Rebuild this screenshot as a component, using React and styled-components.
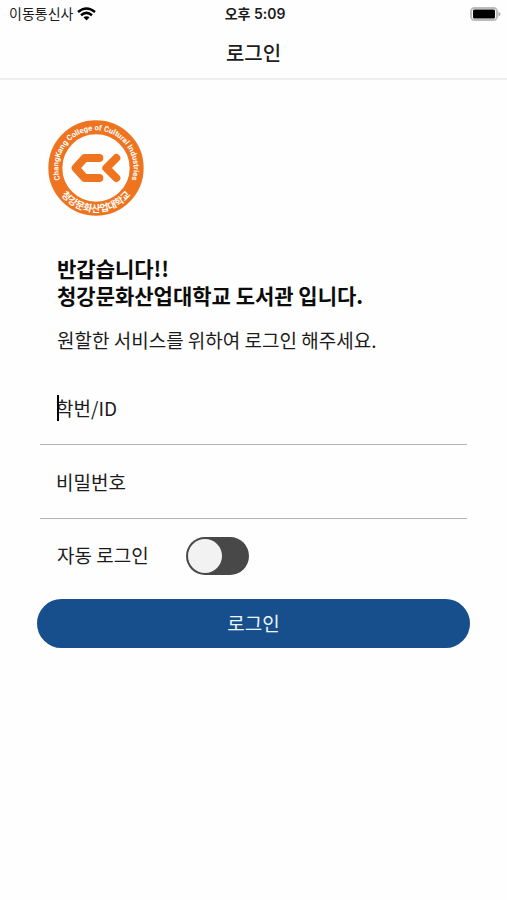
import React, { useState } from 'react';
import styled, { createGlobalStyle } from 'styled-components';

const GlobalStyle = createGlobalStyle`
  * {
    box-sizing: border-box;
  }
  body {
    margin: 0;
    background: #fefefe;
    color: #1c1c1c;
    font-family: 'Noto Sans CJK KR', 'Noto Sans', sans-serif;
  }
`;

const StatusBar = styled.div`
  display: grid;
  grid-template-columns: 1fr auto 1fr;
  align-items: center;
  height: 27px;
  padding: 0 6px 0 9px;
  font-size: 14px;
  line-height: 27px;
`;

const Carrier = styled.div`
  display: flex;
  align-items: center;
  gap: 4px;
`;

const Clock = styled.time`
  font-family: Inter, 'Noto Sans CJK KR', sans-serif;
  font-size: 14px;
  font-weight: 600;
`;

const Battery = styled.svg`
  justify-self: end;
`;

const NavBar = styled.header`
  display: flex;
  align-items: center;
  justify-content: center;
  height: 53px;
  border-bottom: 2px solid #efefef;
`;

const NavTitle = styled.h1`
  margin: 0;
  font-size: 20px;
  font-weight: 500;
  line-height: 28px;
`;

const Main = styled.main`
  padding: 40px 37px;
`;

const Logo = styled.svg`
  display: block;
  width: 96px;
  height: 96px;
  margin-left: 11px;
`;

const Intro = styled.section`
  padding: 39px 0 0 20px;
`;

const Greeting = styled.h2`
  margin: 0;
  color: #0c0c0c;
  font-size: 21px;
  font-weight: 700;
  line-height: 27px;
`;

const Guide = styled.p`
  margin: 17px 0 0;
  font-size: 19px;
  line-height: 28px;
`;

const Form = styled.form`
  margin: 17px 0 0;
`;

const Field = styled.div`
  position: relative;
  margin: 0 3px;
  border-bottom: 1px solid #b4b4b4;
`;

const Input = styled.input`
  display: block;
  width: 100%;
  height: 73px;
  padding: 0 16px;
  border: 0;
  outline: 0;
  background: transparent;
  color: #1c1c1c;
  font-family: inherit;
  font-size: 19px;
  &::placeholder {
    color: #1c1c1c;
    opacity: 1;
  }
`;

const Caret = styled.span`
  position: absolute;
  top: 24px;
  left: 17px;
  width: 2px;
  height: 26px;
  background: #000;
  pointer-events: none;
`;

const AutoLogin = styled.div`
  display: flex;
  align-items: center;
  gap: 37px;
  height: 80px;
  padding: 0 0 6px 20px;
  font-size: 19px;
  line-height: 24px;
`;

const AutoLabel = styled.label`
  padding-bottom: 3px;
`;

const Switch = styled.input`
  appearance: none;
  width: 63px;
  height: 38px;
  margin: 0;
  padding: 2px;
  border-radius: 19px;
  background: ${({ checked }) => (checked ? '#164f8c' : '#484848')};
  cursor: pointer;
  &::before {
    content: '';
    display: block;
    width: 34px;
    height: 34px;
    margin-left: ${({ checked }) => (checked ? 'auto' : '0')};
    border-radius: 50%;
    background: #f2f2f2;
  }
`;

const Button = styled.button`
  display: block;
  width: 100%;
  height: 49px;
  padding: 0 0 3px;
  border: 0;
  border-radius: 25px;
  background: #164f8c;
  color: #eef4fa;
  font-family: inherit;
  font-size: 19px;
  cursor: pointer;
`;

function CollegeLogo() {
  return (
    <Logo viewBox="-144 -144 288 288" role="img" aria-label="청강문화산업대학교">
      <defs>
        <path id="arcTop" d="M-80 80 A113 113 0 1 1 80 80" />
        <path id="arcBottom" d="M-132 0 A132 132 0 0 0 132 0" />
      </defs>
      <circle r="122" fill="none" stroke="#ee741f" strokeWidth="42" />
      <g fill="none" stroke="#ee741f" strokeWidth="24" strokeLinejoin="round" strokeLinecap="round">
        <path d="M10 -30 H-34 L-61 0 L-34 30 H10" />
        <path d="M61 -30 L31 0 L61 30" />
      </g>
      <g fill="#fff" fontWeight="700" textAnchor="middle">
        <text fontSize="23" fontFamily="Roboto, 'Liberation Sans', sans-serif">
          <textPath href="#arcTop" startOffset="50%">ChangKang College of Cultural Industries</textPath>
        </text>
        <text fontSize="29" fontFamily="'Noto Sans CJK KR', sans-serif">
          <textPath href="#arcBottom" startOffset="50%">청강문화산업대학교</textPath>
        </text>
      </g>
    </Logo>
  );
}

function App() {
  const [id, setId] = useState('');
  const [password, setPassword] = useState('');
  const [auto, setAuto] = useState(false);

  return (
    <>
      <GlobalStyle />
      <StatusBar>
        <Carrier>
          이동통신사
          <svg width="19" height="14" viewBox="0 0 19 14" fill="none" stroke="#000" strokeWidth="2.6">
            <path d="M1 5 Q9.500 -2 18 5" />
            <path d="M4 8.200 Q9.500 3.600 15 8.200" />
            <path d="M6.500 10.300 Q9.500 8 12.500 10.300 L9.500 13.500 Z" fill="#000" stroke="none" />
          </svg>
        </Carrier>
        <Clock>오후 5:09</Clock>
        <Battery width="31" height="14" viewBox="0 0 31 14">
          <rect x="1" y="1" width="26" height="12" rx="3.500" fill="#fff" stroke="#bcbcbc" strokeWidth="2" />
          <rect x="3" y="2.500" width="22" height="9" rx="1.500" fill="#000" />
          <path d="M28.500 4.500 Q30.500 5.500 30.500 7 Q30.500 8.500 28.500 9.500 Z" fill="#aaa" />
        </Battery>
      </StatusBar>
      <NavBar>
        <NavTitle>로그인</NavTitle>
      </NavBar>
      <Main>
        <CollegeLogo />
        <Intro>
          <Greeting>
            반갑습니다!!
            <br />
            청강문화산업대학교 도서관 입니다.
          </Greeting>
          <Guide>원할한 서비스를 위하여 로그인 해주세요.</Guide>
        </Intro>
        <Form onSubmit={(e) => e.preventDefault()}>
          <Field>
            <Input
              type="text"
              aria-label="학번/ID"
              placeholder="학번/ID"
              value={id}
              onChange={(e) => setId(e.target.value)}
            />
            {!id && <Caret />}
          </Field>
          <Field>
            <Input
              type="password"
              aria-label="비밀번호"
              placeholder="비밀번호"
              value={password}
              onChange={(e) => setPassword(e.target.value)}
            />
          </Field>
          <AutoLogin>
            <AutoLabel htmlFor="auto">자동 로그인</AutoLabel>
            <Switch
              id="auto"
              type="checkbox"
              role="switch"
              checked={auto}
              onChange={(e) => setAuto(e.target.checked)}
            />
          </AutoLogin>
          <Button type="submit">로그인</Button>
        </Form>
      </Main>
    </>
  );
}

export default App;
